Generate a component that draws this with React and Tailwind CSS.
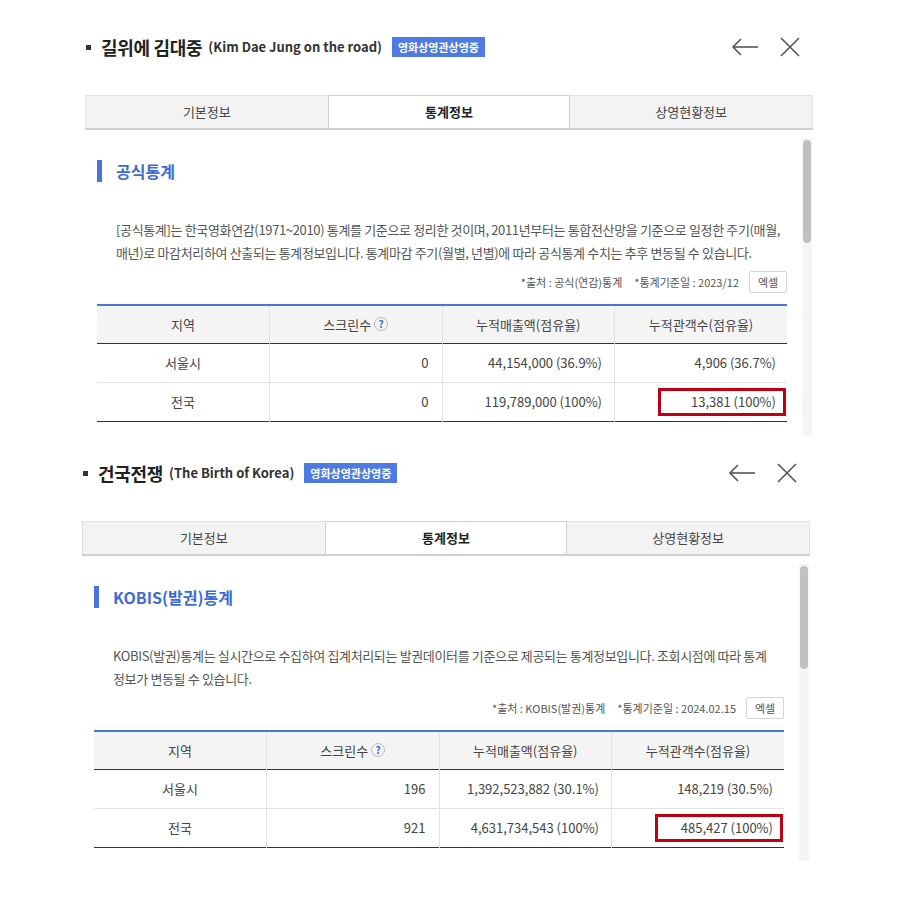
import React from 'react';

const font = { fontFamily: '"Noto Sans CJK KR", "Noto Sans", sans-serif' };

const panels = [
  {
    title: '길위에 김대중',
    english: '(Kim Dae Jung on the road)',
    heading: '공식통계',
    desc: '[공식통계]는 한국영화연감(1971~2010) 통계를 기준으로 정리한 것이며, 2011년부터는 통합전산망을 기준으로 일정한 주기(매월, 매년)로 마감처리하여 산출되는 통계정보입니다. 통계마감 주기(월별, 년별)에 따라 공식통계 수치는 추후 변동될 수 있습니다.',
    source: '*출처 : 공식(연감)통계',
    date: '*통계기준일 : 2023/12',
    rows: [
      ['서울시', '0', '44,154,000 (36.9%)', '4,906 (36.7%)'],
      ['전국', '0', '119,789,000 (100%)', '13,381 (100%)'],
    ],
  },
  {
    title: '건국전쟁',
    english: '(The Birth of Korea)',
    heading: 'KOBIS(발권)통계',
    desc: 'KOBIS(발권)통계는 실시간으로 수집하여 집계처리되는 발권데이터를 기준으로 제공되는 통계정보입니다. 조회시점에 따라 통계 정보가 변동될 수 있습니다.',
    source: '*출처 : KOBIS(발권)통계',
    date: '*통계기준일 : 2024.02.15',
    rows: [
      ['서울시', '196', '1,392,523,882 (30.1%)', '148,219 (30.5%)'],
      ['전국', '921', '4,631,734,543 (100%)', '485,427 (100%)'],
    ],
  },
];

const ArrowLeft = () => (
  <svg width="28" height="20" viewBox="0 0 28 20" fill="none" stroke="#555" strokeWidth="1.6">
    <path d="M27 10H2" />
    <path d="M10 2L2 10L10 18" />
  </svg>
);

const CloseIcon = () => (
  <svg width="22" height="22" viewBox="0 0 22 22" fill="none" stroke="#555" strokeWidth="1.6">
    <path d="M2 2L20 20M20 2L2 20" />
  </svg>
);

const Panel = ({ data, className }) => (
  <div className={`w-[728px] ${className}`}>
    <div className="h-[36px] flex items-center">
      <span className="w-[5px] h-[5px] bg-[#333] ml-[1px] mr-[10px]" />
      <span className="text-[18px] font-bold text-[#222] tracking-[-0.3px]">{data.title}</span>
      <span className="text-[13px] font-bold text-[#333] ml-[6px]">{data.english}</span>
      <span className="ml-[10px] h-[20px] px-[6px] bg-[#4d7be3] text-white text-[11px] font-bold flex items-center">
        영화상영관상영중
      </span>
      <div className="ml-auto flex items-center gap-[20px] mr-[12px]">
        <ArrowLeft />
        <CloseIcon />
      </div>
    </div>

    <div className="mt-[30px] grid grid-cols-3 border-b-2 border-[#d0d0d0] h-[35px] text-[13px]">
      <div className="flex items-center justify-center bg-[#f3f3f3] border-t border-l border-[#e2e2e2] text-[#444]">기본정보</div>
      <div className="flex items-center justify-center bg-white border-t border-x border-[#cfcfcf] font-bold text-[#222]">통계정보</div>
      <div className="flex items-center justify-center bg-[#f3f3f3] border-t border-r border-[#e2e2e2] text-[#444]">상영현황정보</div>
    </div>

    <div className="h-[305px] overflow-hidden flex">
      <div className="w-[690px] ml-[12px] pt-[30px]">
        <div className="flex items-center h-[22px]">
          <span className="w-[5px] h-[22px] bg-[#4a75e0]" />
          <span className="ml-[14px] text-[16px] font-bold text-[#3d6ad8]">{data.heading}</span>
        </div>
        <p className="mt-[36px] pl-[19px] mr-[-6px] text-[13px] tracking-[-0.35px] leading-[23px] text-[#555] break-keep">{data.desc}</p>
        <div className="mt-[7px] flex items-center justify-end text-[11px] text-[#555]">
          <span>{data.source}</span>
          <span className="ml-[12px]">{data.date}</span>
          <span className="ml-[10px] w-[38px] h-[22px] border border-[#d5d5d5] rounded-[2px] flex items-center justify-center text-[#555]">엑셀</span>
        </div>
        <table className="mt-[11px] w-full border-t-2 border-[#4a75e0] border-b border-b-[#333] text-[13px] text-[#444] table-fixed">
          <thead>
            <tr className="bg-[#f4f4f4] h-[38px] border-b border-[#333]">
              <th className="font-normal border-r border-[#e3e3e3]">지역</th>
              <th className="font-normal border-r border-[#e3e3e3]">
                <span className="inline-flex items-center gap-[3px]">
                  스크린수
                  <span className="w-[14px] h-[14px] rounded-full border border-[#bbb] text-[10px] font-bold text-[#3d6ad8] flex items-center justify-center leading-none">?</span>
                </span>
              </th>
              <th className="font-normal border-r border-[#e3e3e3]">누적매출액(점유율)</th>
              <th className="font-normal">누적관객수(점유율)</th>
            </tr>
          </thead>
          <tbody>
            {data.rows.map((row, i) => (
              <tr key={i} className={`h-[39px] ${i === 0 ? 'border-b border-[#e3e3e3]' : ''}`}>
                <td className="text-center border-r border-[#e3e3e3]">{row[0]}</td>
                <td className="text-right pr-[13px] border-r border-[#e3e3e3]">{row[1]}</td>
                <td className="text-right pr-[12px] border-r border-[#e3e3e3]">{row[2]}</td>
                <td className="text-right pr-[11px] relative">
                  {i === 1 && (
                    <span className="absolute left-[43px] right-[1px] top-[5px] bottom-[5px] border-[3px] border-[#c00010]" />
                  )}
                  {row[3]}
                </td>
              </tr>
            ))}
          </tbody>
        </table>
      </div>
      <div className="ml-[15px] mt-[8px] w-[10px] h-[297px] bg-[#f5f5f5] flex justify-center pt-[2px]">
        <div className="w-[8px] h-[103px] bg-[#c1c1c1] rounded-full" />
      </div>
    </div>
  </div>
);

export default function App() {
  return (
    <div className="w-[900px] min-h-[900px] bg-white pt-[29px]" style={font}>
      <Panel data={panels[0]} className="ml-[85px]" />
      <Panel data={panels[1]} className="ml-[82px] mt-[20px]" />
    </div>
  );
}
